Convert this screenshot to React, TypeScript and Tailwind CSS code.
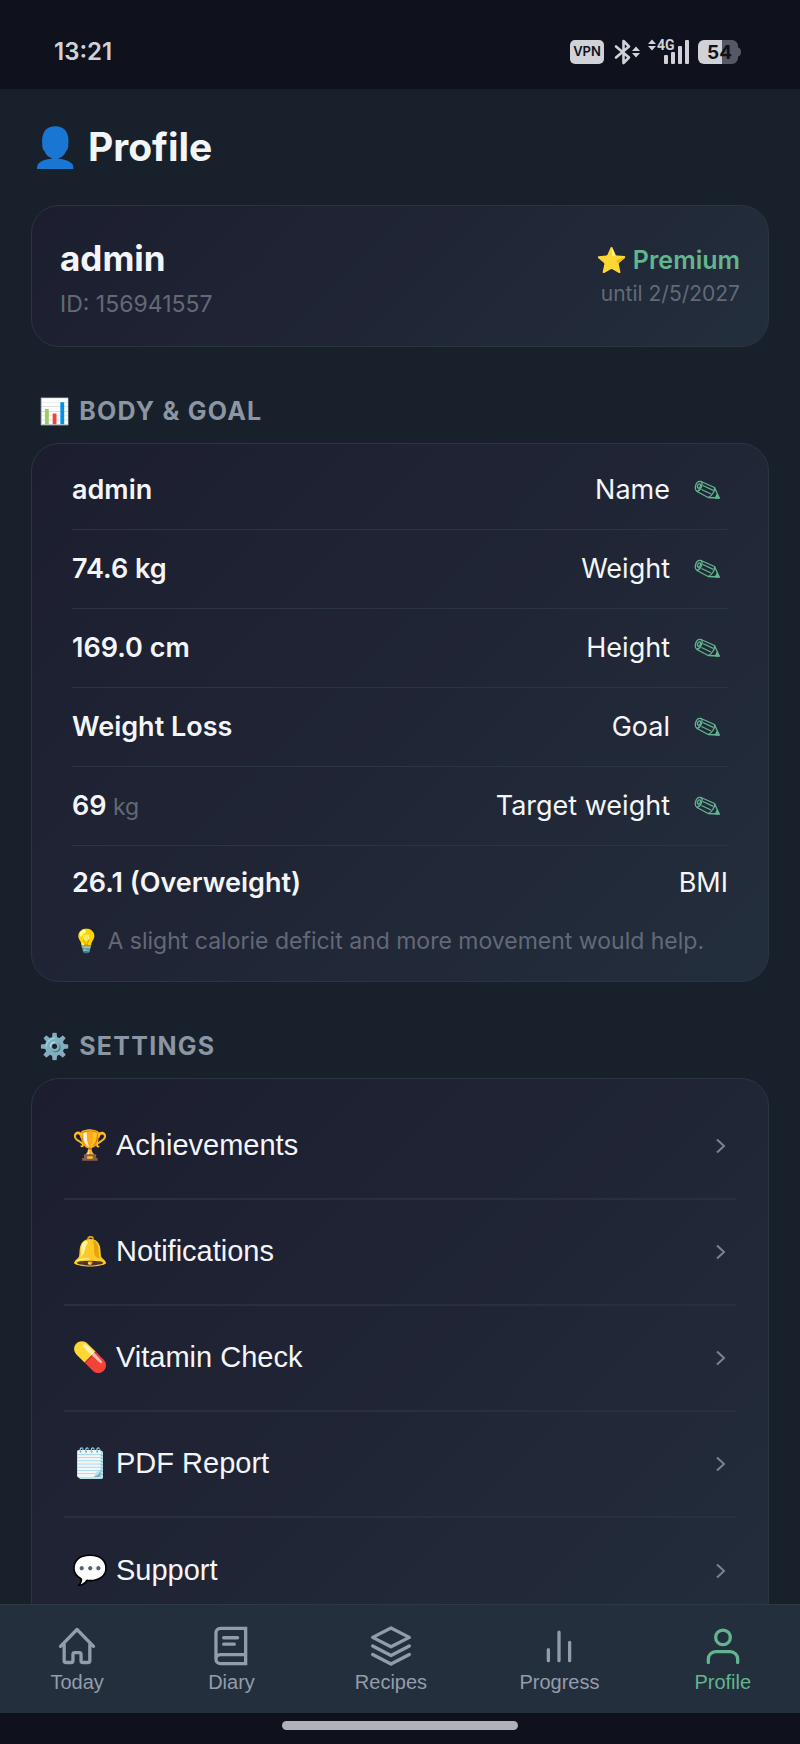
import type { ReactNode } from "react";

type BodyRow = { value: string; unit?: string; label: string };

const BODY_ROWS: BodyRow[] = [
  { value: "admin", label: "Name" },
  { value: "74.6 kg", label: "Weight" },
  { value: "169.0 cm", label: "Height" },
  { value: "Weight Loss", label: "Goal" },
  { value: "69", unit: "kg", label: "Target weight" },
];

const SETTINGS = [
  { icon: "🏆", label: "Achievements" },
  { icon: "🔔", label: "Notifications" },
  { icon: "💊", label: "Vitamin Check" },
  { icon: "🗒️", label: "PDF Report" },
  { icon: "💬", label: "Support" },
];

const CARD = "rounded-[28px] border border-[#2b3441] bg-linear-135 from-[#1c1e2f] via-[#202535] to-[#232e3c]";

function StatusBar() {
  return (
    <header className="flex h-[89px] shrink-0 items-center justify-between bg-[#0f111c] px-[54px] pt-[15px] text-[#d0d2d8]">
      <time className="text-[24px] leading-8 font-semibold">13:21</time>
      <div className="flex items-center gap-2 pr-1">
        <span className="flex h-6 w-[34px] items-center justify-center rounded-[5px] bg-[#d0d2d8] text-[13px] font-semibold text-[#0f111c]">
          VPN
        </span>
        <svg width="28" height="26" viewBox="0 0 28 26" fill="none" stroke="currentColor" strokeWidth="2.600" aria-label="Bluetooth">
          <path d="M4 7.500l13 11-5.500 5.500V2l5.500 5.500-13 11" strokeLinejoin="round" strokeLinecap="round" />
          <path d="M24 7.500l4 4.500h-8zM24 18.500l4-4.500h-8z" fill="currentColor" stroke="none" />
        </svg>
        <svg width="42" height="28" viewBox="0 0 42 28" fill="currentColor" aria-label="Signal">
          <path d="M4 1.500l4 4.500H0zM4 12.500L8 8H0z" />
          <text x="9" y="12" fontSize="14" fontWeight="700" fontFamily="Roboto">4G</text>
          <rect x="16" y="17" width="4" height="9" rx="1" />
          <rect x="23" y="14" width="4" height="12" rx="1" />
          <rect x="30" y="8" width="4" height="18" rx="1" />
          <rect x="37" y="2" width="4" height="24" rx="1" />
        </svg>
        <svg width="44" height="24" viewBox="0 0 44 24" aria-label="Battery">
          <path d="M24 0h10a6 6 0 0 1 6 6v1.500c2 .5 3 2 3 4.500s-1 4-3 4.500V18a6 6 0 0 1-6 6H24z" fill="#565863" />
          <path d="M6 0h18v24H6a6 6 0 0 1-6-6V6a6 6 0 0 1 6-6z" fill="#d0d2d8" />
          <text x="9" y="19" fontSize="19" fontWeight="700" fontFamily="Inter" fill="#0f111c">54</text>
        </svg>
      </div>
    </header>
  );
}

function Pencil() {
  return (
    <svg width="26" height="20" viewBox="0 0 26 20" fill="none" stroke="currentColor" strokeWidth="1.300" strokeLinejoin="round">
      <path d="M7 1.500L20.500 7.500l4.700 10.500-11-.5L3 11.500C-.5 9 2 .2 7 1.500z" />
      <path d="M7 1.500c2.500 1.500 0 9-4 10M20.500 7.500c1 3-3 9-6.300 10M8.800 5.500l10.500 4.800M7.500 9.500l9.500 4.500" />
      <ellipse cx="5" cy="6" rx="1.400" ry="2.300" transform="rotate(20 5 6)" />
      <path d="M23 14.500l2.200 3.500-3.700-.2z" fill="currentColor" />
    </svg>
  );
}

function SectionTitle({ icon, children }: { icon: string; children: ReactNode }) {
  return (
    <h2 className="flex items-center gap-2 px-2 text-[25px] leading-8 font-bold tracking-wider text-[#8b95a3] uppercase">
      <span aria-hidden="true">{icon}</span>
      {children}
    </h2>
  );
}

function TabIcon({ children }: { children: ReactNode }) {
  return (
    <svg width="44" height="44" viewBox="0 0 24 24" fill="none" stroke="currentColor" strokeWidth="1.800" strokeLinecap="round" strokeLinejoin="round">
      {children}
    </svg>
  );
}

const TABS = [
  {
    label: "Today",
    icon: <path d="M3 12.200L12 3l9 9.200M5 11v9c0 .6.400 1 1 1h2.800c.6 0 1-.4 1-1v-3.400c0-.6.400-1 1-1h2.400c.6 0 1 .4 1 1V20c0 .6.400 1 1 1H18c.6 0 1-.4 1-1v-9" />,
  },
  {
    label: "Diary",
    icon: <path d="M20 2.400v19.200H6.200A2.400 2.400 0 0 1 3.800 19.200V4.800a2.400 2.400 0 0 1 2.400-2.400zM20 16.700H6.200a2.400 2.400 0 0 0-2.400 2.400M8 7.500h7.600M8 11h5.800" strokeLinejoin="miter" />,
  },
  {
    label: "Recipes",
    icon: <path d="M12 2.200l10 5.100-10 5.100-10-5.100zM2 12l10 5.200L22 12M2 16.600l10 5.200 10-5.200" />,
  },
  { label: "Progress", icon: <path d="M6.200 20v-6M12 20V4.500M17.800 20V10" /> },
  {
    label: "Profile",
    icon: (
      <>
        <circle cx="12" cy="7.300" r="4" />
        <path d="M4 21v-1.900a4 4 0 0 1 4-4h8a4 4 0 0 1 4 4V21" />
      </>
    ),
    active: true,
  },
];

export default function App() {
  return (
    <div className="flex h-screen flex-col bg-[#18212b] font-['Inter',sans-serif] text-[#f3f5f8]">
      <StatusBar />

      <main className="min-h-0 flex-1 overflow-y-auto px-[31px] pt-8 [scrollbar-width:none]">
        <h1 className="flex items-center gap-2 text-[39px] leading-[52px] font-bold">
          <span aria-hidden="true">👤</span>
          Profile
        </h1>

        <section className={`${CARD} mt-8 flex items-center justify-between px-7 py-6`}>
          <div>
            <p className="text-[35px] leading-[56px] font-bold">admin</p>
            <p className="text-[23px] leading-9 text-[#626977]">ID: 156941557</p>
          </div>
          <div className="text-right">
            <p className="text-[25px] leading-9 font-semibold text-[#62b58e]">
              <span aria-hidden="true">⭐</span> Premium
            </p>
            <p className="text-[21px] leading-8 text-[#626977]">until 2/5/2027</p>
          </div>
        </section>

        <div className="mt-12">
          <SectionTitle icon="📊">Body &amp; Goal</SectionTitle>
        </div>
        <section className={`${CARD} mt-4 px-10 pt-[7px] pb-5 text-[27px]`}>
          {BODY_ROWS.map((row) => (
            <div key={row.label} className="flex h-[79px] items-center justify-between border-b border-[#2b3441]">
              <span className="font-semibold">
                {row.value}
                {row.unit && <span className="text-[23px] font-normal text-[#626977]"> {row.unit}</span>}
              </span>
              <span className="flex items-center gap-6 pr-2">
                {row.label}
                <button type="button" aria-label={`Edit ${row.label}`} className="text-[#62b58e]">
                  <Pencil />
                </button>
              </span>
            </div>
          ))}
          <div className="flex h-[75px] items-center justify-between">
            <span className="font-semibold">26.1 (Overweight)</span>
            <span>BMI</span>
          </div>
          <p className="text-[23px] leading-10 text-[#626977]">
            <span aria-hidden="true">💡</span> A slight calorie deficit and more movement would help.
          </p>
        </section>

        <div className="mt-12">
          <SectionTitle icon="⚙️">Settings</SectionTitle>
        </div>
        <section className={`${CARD} mt-4 px-8 pt-[15px] pb-20`}>
          {SETTINGS.map((item) => (
            <button
              key={item.label}
              type="button"
              className="flex h-[106px] w-full items-center gap-2 border-b-2 border-[#292f3e] px-2 text-left font-['Liberation_Sans',sans-serif] text-[29px] last:border-b-0"
            >
              <span aria-hidden="true">{item.icon}</span>
              <span className="flex-1">{item.label}</span>
              <svg width="14" height="18" viewBox="0 0 14 18" fill="none" stroke="#7b8290" strokeWidth="2">
                <path d="M3 2.500l7 6.500-7 6.500" />
              </svg>
            </button>
          ))}
        </section>
      </main>

      <nav className="flex h-[109px] shrink-0 justify-around border-t border-[#2e3946] bg-[#242f3d] pt-[19px]">
        {TABS.map((tab) => (
          <a
            key={tab.label}
            href={`#${tab.label.toLowerCase()}`}
            aria-current={tab.active ? "page" : undefined}
            className={`flex min-w-[62px] flex-col items-center font-['Liberation_Sans',sans-serif] text-[20px] leading-7 ${tab.active ? "text-[#62b58e]" : "text-[#929dac]"}`}
          >
            <TabIcon>{tab.icon}</TabIcon>
            {tab.label}
          </a>
        ))}
      </nav>
      <footer className="flex h-[31px] shrink-0 justify-center bg-[#0f111c] pt-2">
        <div className="h-[9px] w-[236px] rounded-full bg-[#b0b0b8]" />
      </footer>
    </div>
  );
}
